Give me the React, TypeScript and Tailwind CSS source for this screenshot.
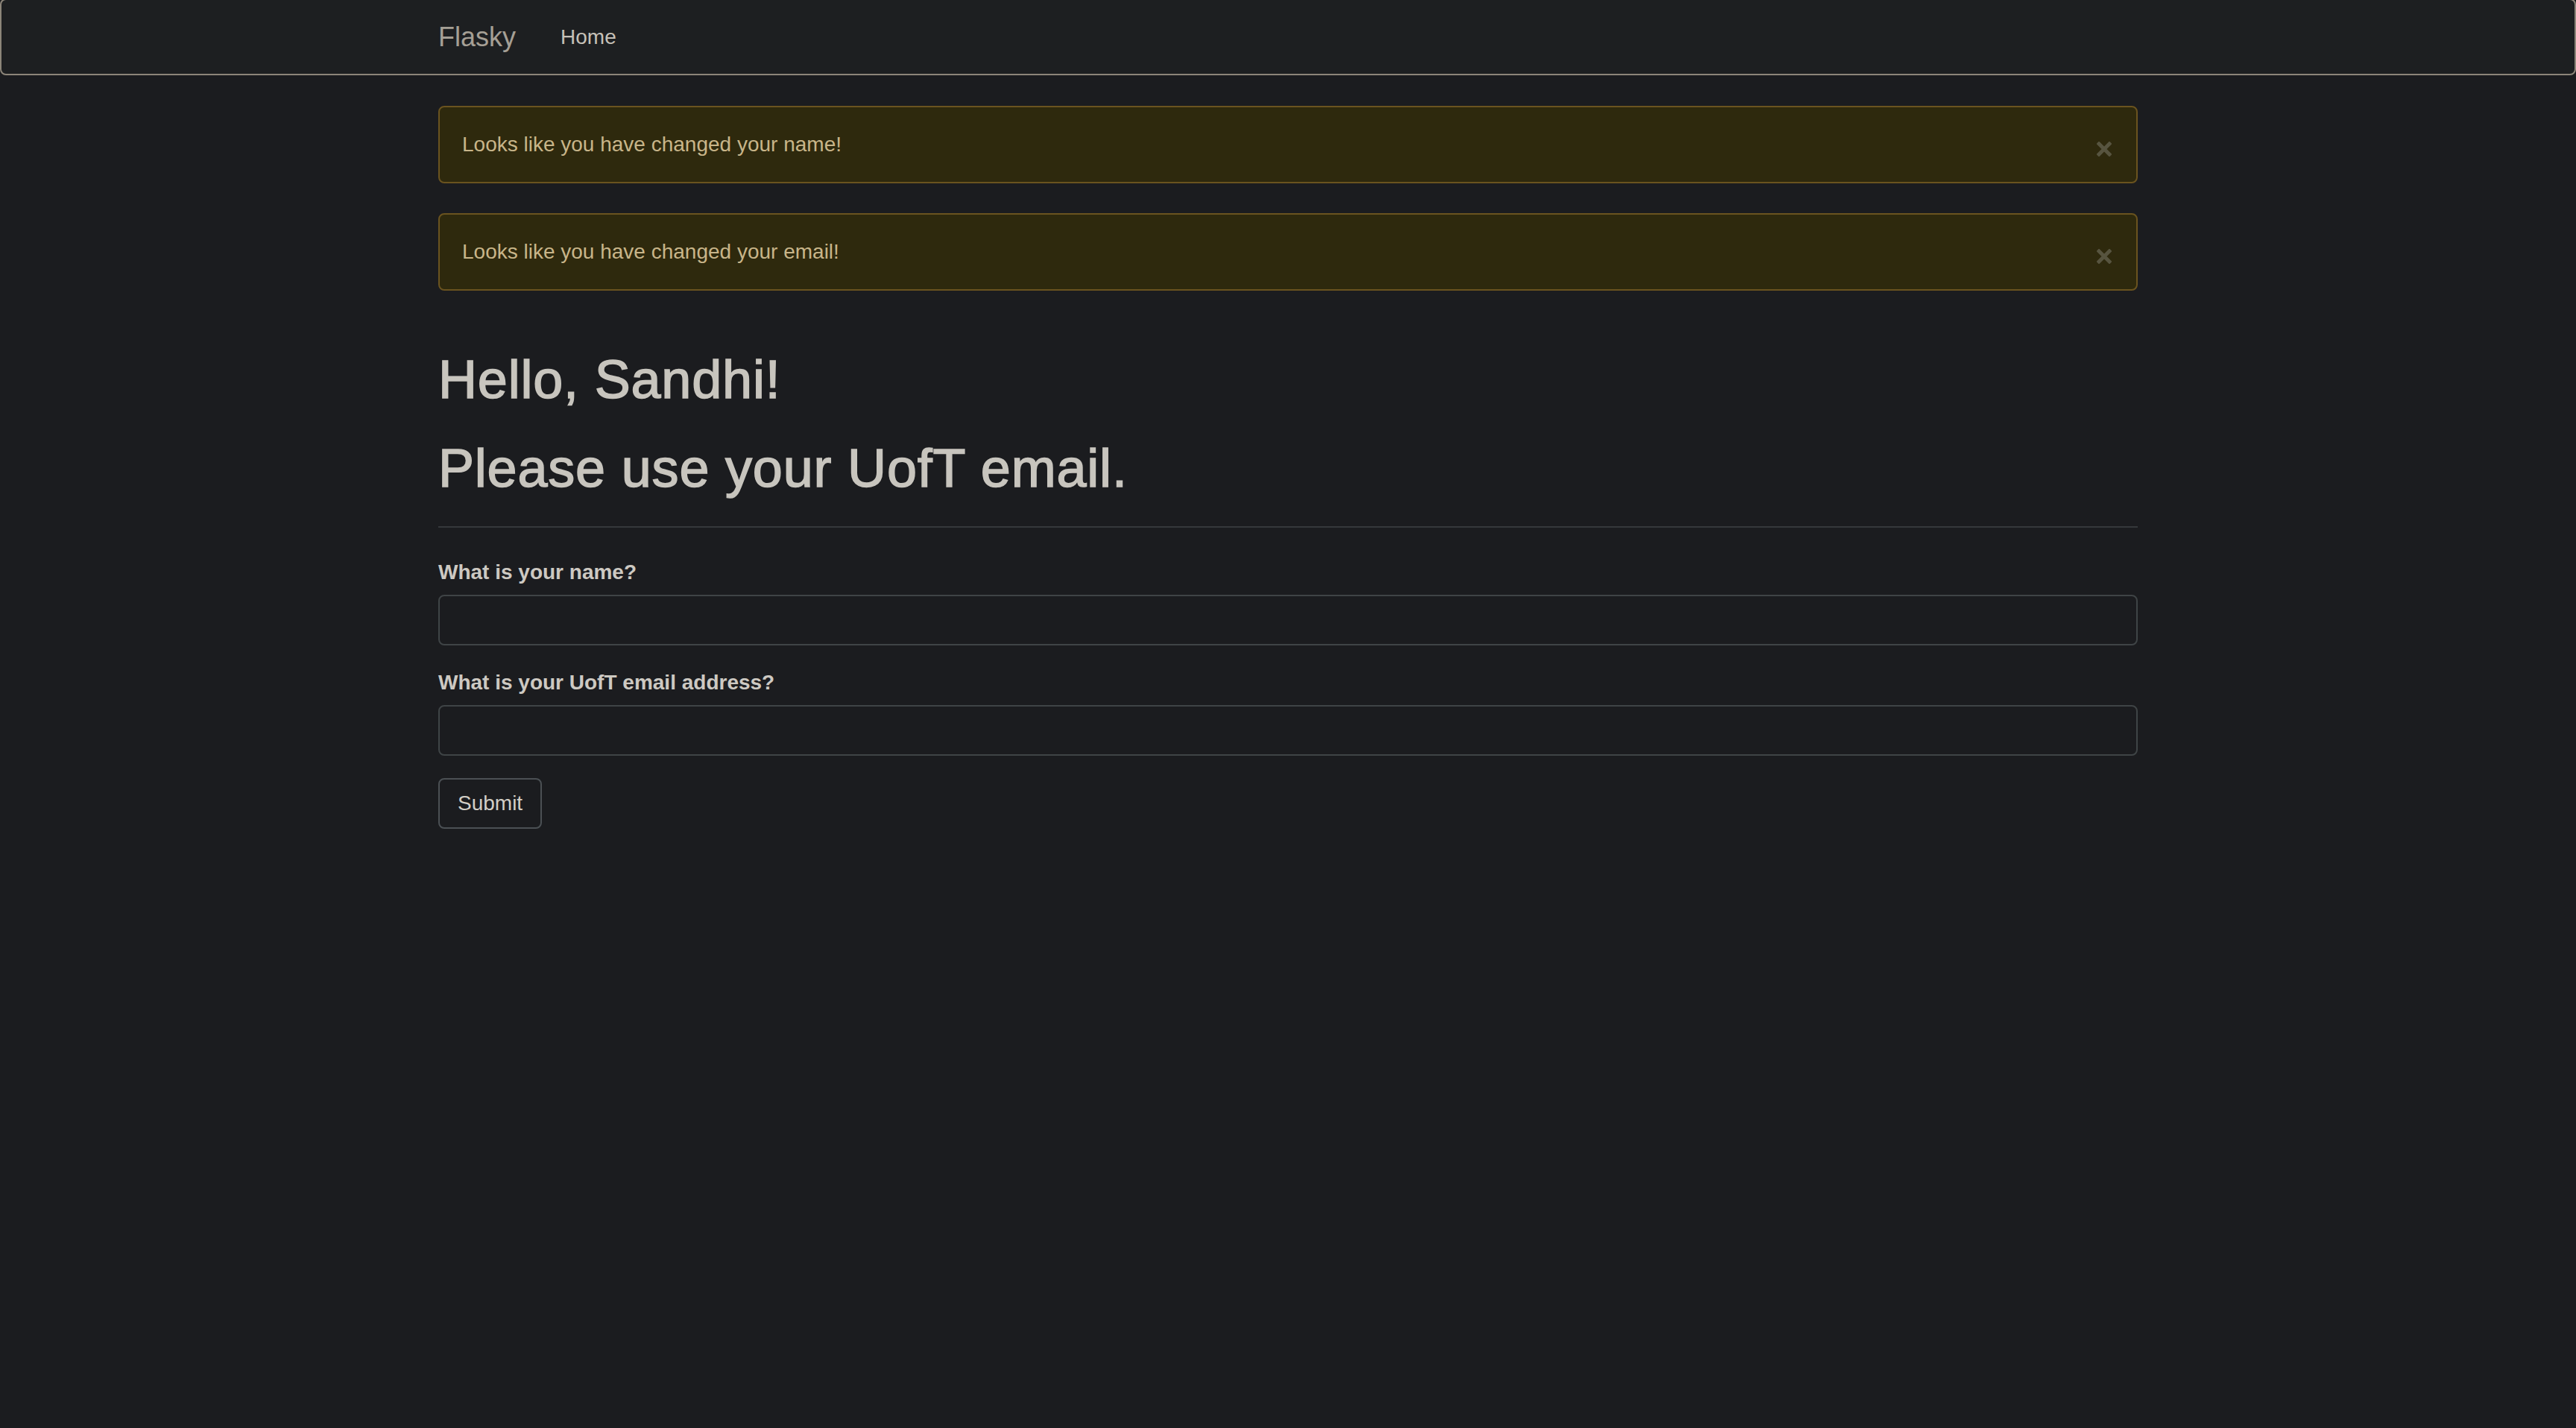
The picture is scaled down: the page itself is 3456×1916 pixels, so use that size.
const alerts = [
  "Looks like you have changed your name!",
  "Looks like you have changed your email!",
];

function CloseIcon() {
  return (
    <svg width="20" height="20" viewBox="0 0 20 20" aria-hidden="true">
      <path d="M3 3 L17 17 M17 3 L3 17" stroke="#57543f" strokeWidth="5" strokeLinecap="square" />
    </svg>
  );
}

function Navbar() {
  return (
    <nav className="-mt-[2px] mb-[41px] h-[103px] rounded-[8px] border-2 border-[#8c8579] bg-[#1d1f21]">
      <div className="mx-auto flex h-full w-[2280px] items-center">
        <a className="pr-[30px] text-[36px] leading-[40px] text-[#a59f95]">Flasky</a>
        <a className="px-[30px] text-[28px] leading-[40px] text-[#c6c1b8]">Home</a>
      </div>
    </nav>
  );
}

function Alert({ text }: { text: string }) {
  return (
    <div className="mb-[40px] flex items-center justify-between rounded-[8px] border-2 border-[#6a531f] bg-[#2e290d] py-[30px] pl-[30px] pr-[33px]">
      <span className="text-[28px] leading-[40px] text-[#c8b589]">{text}</span>
      <button className="mt-[12px]">
        <CloseIcon />
      </button>
    </div>
  );
}

function Field({ label }: { label: string }) {
  return (
    <div className="mb-[30px] flex flex-col">
      <label className="mb-[10px] text-[28px] font-bold leading-[40px] text-[#cdc9c2]">{label}</label>
      <input className="h-[68px] rounded-[8px] border-2 border-[#3f4446] bg-[#1b1c1f] px-[24px] text-[28px] text-[#cdc9c2] outline-none" />
    </div>
  );
}

export default function App() {
  return (
    <div className="min-h-screen overflow-hidden bg-[#1b1c1f] font-['Liberation_Sans',Arial,sans-serif]">
      <Navbar />
      <main className="mx-auto flex w-[2280px] flex-col">
        {alerts.map((a) => (
          <Alert key={a} text={a} />
        ))}
        {/* headings: medium weight faked with a thin stroke */}
        <div className="mt-[40px] flex flex-col border-b-2 border-[#35383b] pb-[38px] text-[#c8c5be] [-webkit-text-stroke:1.5px_#c8c5be]">
          <h1 className="text-[72px] font-medium leading-[79.2px] tracking-[0.8px]">Hello, Sandhi!</h1>
          <h1 className="mt-[40px] text-[72px] font-medium leading-[79.2px] tracking-[0.8px]">
            Please use your UofT email.
          </h1>
        </div>
        <form className="mt-[40px] flex flex-col" onSubmit={(e) => e.preventDefault()}>
          <Field label="What is your name?" />
          <Field label="What is your UofT email address?" />
          <div>
            <button
              type="submit"
              className="h-[68px] rounded-[8px] border-2 border-[#4b5054] bg-[#1b1c1f] px-[24px] text-[28px] leading-[40px] text-[#d2cec6]"
            >
              Submit
            </button>
          </div>
        </form>
      </main>
    </div>
  );
}
